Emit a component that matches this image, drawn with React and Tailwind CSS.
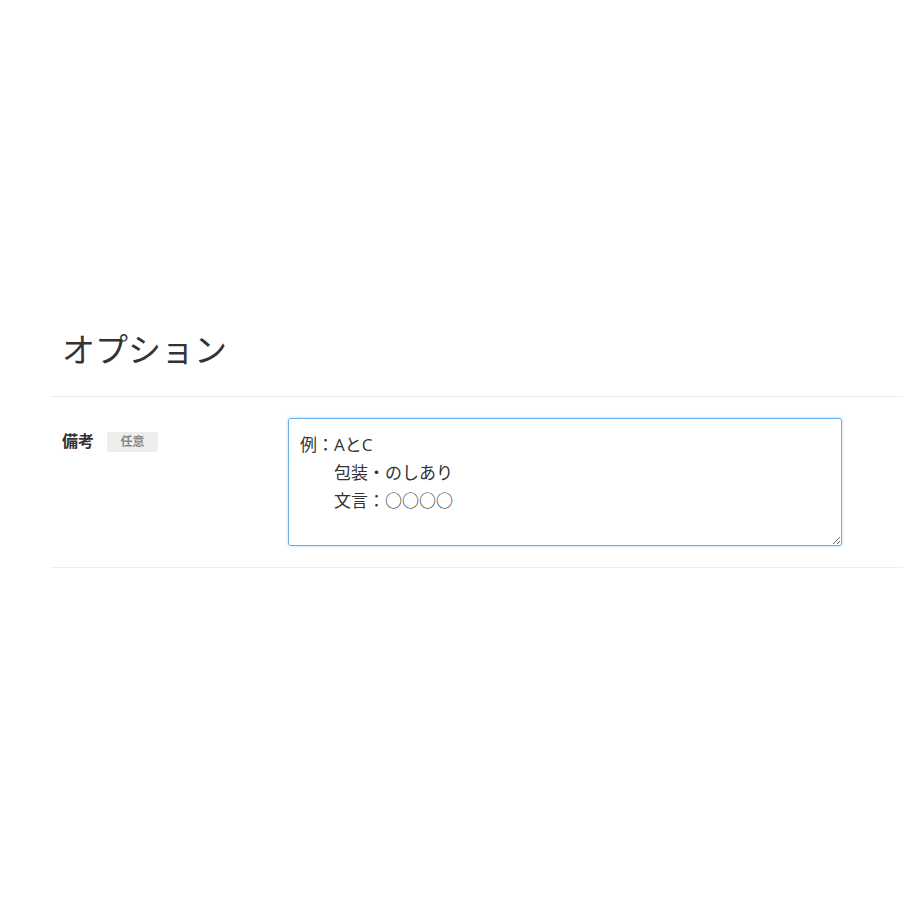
export default function App() {
  return (
    <div
      className="min-h-[920px] bg-white text-[#333] pt-[322px]"
      style={{ fontFamily: '"DejaVu Sans", "Noto Sans CJK JP", sans-serif' }}
    >
      <section className="ml-[51px] w-[852px]">
        <h2
          className="px-[11px] pb-[22px] text-[33px] leading-[52px] font-normal text-[#333]"
          style={{ fontFamily: '"Noto Sans CJK JP", sans-serif' }}
        >
          オプション
        </h2>

        <div className="flex border-t border-b border-[#eee] py-[21px]">
          <div className="w-[237px] pl-[11px] pt-[14px] flex items-start gap-[13px]">
            <span className="text-[16px] font-bold leading-[20px]">備考</span>
            <span className="w-[51px] text-center rounded-[3px] bg-[#eee] text-[12px] font-bold leading-[20px] text-[#888]">
              任意
            </span>
          </div>
          <textarea
            className="h-[128px] w-[554px] resize-y rounded-[3px] border border-[#66afe9] px-[11px] pt-[12px] pb-[10px] text-[17px] leading-[28px] text-[#333] outline-none shadow-[0_0_3px_rgba(102,175,233,0.5)]"
            style={{ fontFamily: '"Open Sans", "Noto Sans CJK JP", sans-serif' }}
            defaultValue={"例：AとC\n　　包装・のしあり\n　　文言：○○○○"}
          />
        </div>
      </section>
    </div>
  );
}
